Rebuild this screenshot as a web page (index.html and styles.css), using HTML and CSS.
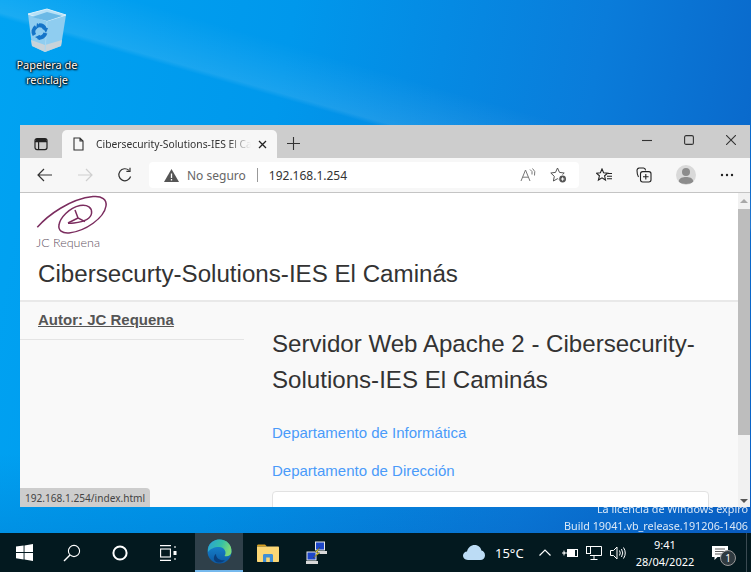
FILE: index.html
```html
<!DOCTYPE html>
<html lang="es">
<head>
<meta charset="utf-8">
<title>Escritorio</title>
<link rel="stylesheet" href="styles.css">
</head>
<body>
<div class="screen">
  <div class="desktop">
    <div class="desk-icon">
      <svg class="bin" width="46" height="48" viewBox="0 0 46 48">
        <path d="M4 8 L23 3 L42 9 L37 40 L21 46 L8 40 Z" fill="#8fcdf0"/>
        <path d="M4 8 L23 3 L42 9 L23 15 Z" fill="#b5e0f7" stroke="#d9f0fb" stroke-width="1"/>
        <path d="M8 11 L23 6 L38 10 L23 15 Z" fill="#6bb9e6"/>
        <path d="M7 34 L21 39 L38 34 L37 40 L21 46 L8 40 Z" fill="#c8d3da"/>
        <path d="M23 15 L21 46" stroke="#a5d8f3" stroke-width="1" fill="none"/>
        <g fill="none" stroke="#1574c8" stroke-width="4">
          <path d="M10.4 29 A6 6 0 0 1 12 20.8"/>
          <path d="M15 19.4 A6 6 0 0 1 21 23"/>
          <path d="M21.4 27 A6 6 0 0 1 14 31.4"/>
        </g>
        <g fill="#1574c8">
          <path d="M13 17 L17 20 L12 23 Z"/>
          <path d="M19 22 L24 22 L22 27 Z"/>
          <path d="M16 29 L16 34 L11 31 Z"/>
        </g>
      </svg>
      <span class="desk-label">Papelera de reciclaje</span>
    </div>

    <div class="watermark">
      <div>La licencia de Windows expiró</div>
      <div>Build 19041.vb_release.191206-1406</div>
    </div>

    <div class="window">
      <div class="tabstrip">
        <div class="tab-actions">
          <svg width="14" height="14" viewBox="0 0 14 14" fill="none" stroke="#222" stroke-width="1.2"><rect x="1" y="1.6" width="12" height="11" rx="2"/><path d="M1 4.6 H13 M4.6 4.6 V12.6"/><path d="M1.5 2 H12.5 V4.5 H1.5 Z" fill="#222" stroke="none"/></svg>
        </div>
        <div class="tab">
          <svg class="favicon" width="11" height="14" viewBox="0 0 11 14" fill="none" stroke="#333" stroke-width="1.1"><path d="M1 1 H7 L10 4 V13 H1 Z M7 1 V4 H10"/></svg>
          <span class="tab-title">Cibersecurity-Solutions-IES El Caminás</span>
          <svg class="tab-close" width="9" height="9" viewBox="0 0 9 9" stroke="#222" stroke-width="1.3"><path d="M1 1 L8 8 M8 1 L1 8"/></svg>
        </div>
        <svg class="new-tab" width="13" height="13" viewBox="0 0 13 13" stroke="#333" stroke-width="1.1"><path d="M6.5 0 V13 M0 6.5 H13"/></svg>
        <div class="win-controls">
          <svg width="10" height="10" viewBox="0 0 10 10" stroke="#333" stroke-width="1.1"><path d="M0 5.5 H10"/></svg>
          <svg width="10" height="10" viewBox="0 0 10 10" fill="none" stroke="#333" stroke-width="1.1"><rect x=".6" y=".6" width="8.8" height="8.8" rx="1.5"/></svg>
          <svg width="10" height="10" viewBox="0 0 10 10" stroke="#333" stroke-width="1.1"><path d="M0 0 L10 10 M10 0 L0 10"/></svg>
        </div>
      </div>

      <div class="toolbar">
        <div class="nav-buttons">
          <svg width="16" height="14" viewBox="0 0 16 14" fill="none" stroke="#333" stroke-width="1.2"><path d="M15 7 H1 M7 1 L1 7 L7 13"/></svg>
          <svg width="16" height="14" viewBox="0 0 16 14" fill="none" stroke="#cfcfcf" stroke-width="1.2"><path d="M1 7 H15 M9 1 L15 7 L9 13"/></svg>
          <svg width="16" height="16" viewBox="0 0 16 16" fill="none" stroke="#333" stroke-width="1.2"><path d="M13.6 9.5 A6 6 0 1 1 12 3.4"/><path d="M13 .8 V4.4 H9.4"/></svg>
        </div>
        <div class="address">
          <svg width="15" height="13" viewBox="0 0 15 13"><path d="M7.5 0 L15 13 H0 Z" fill="#555"/><path d="M7.5 4.5 V9 M7.5 10 V11.4" stroke="#fff" stroke-width="1.3"/></svg>
          <span class="insecure">No seguro</span>
          <span class="addr-sep"></span>
          <span class="url">192.168.1.254</span>
          <span class="addr-end">
            <svg width="16" height="14" viewBox="0 0 16 14" fill="none" stroke="#777" stroke-width="1"><path d="M1 13 L5.5 2 L10 13 M2.8 9.2 H8.2"/><path d="M10 1.5 Q13 3 12 6.5 M12.5 .5 Q16 3 14.5 7.5"/></svg>
            <svg width="17" height="16" viewBox="0 0 17 16" fill="none" stroke="#555" stroke-width="1"><path d="M7.5 1 L9.5 5.4 L14.2 6 L10.7 9.3 L11.6 14 L7.5 11.7 L3.4 14 L4.3 9.3 L.8 6 L5.5 5.4 Z"/><circle cx="12.6" cy="12" r="4.4" fill="#fff" stroke="none"/><circle cx="12.6" cy="12" r="3.4" fill="#555" stroke="none"/><path d="M10.9 12 H14.3 M12.6 10.3 V13.7" stroke="#fff"/></svg>
          </span>
        </div>
        <div class="tools">
          <svg width="16" height="14" viewBox="0 0 16 14" fill="none" stroke="#222" stroke-width="1.1"><path d="M6 1 L7.6 4.8 L11.6 5.2 L8.6 7.8 L9.5 12 L6 9.8 L2.4 12 L3.4 7.8 L.4 5.2 L4.4 4.8 Z"/><path d="M12 5.5 H16 M11 8.2 H16 M11 10.8 H16"/></svg>
          <svg width="16" height="16" viewBox="0 0 16 16" fill="none" stroke="#222" stroke-width="1.1"><path d="M2.5 10 C1.2 8 1 5 1 3.5 C1 2 2 1.2 3.2 1 L7.5 1 C9 1.2 9.4 2 9.6 3.4"/><rect x="4.5" y="4.6" width="10.5" height="10.4" rx="2.2"/><path d="M9.8 7 V12.6 M7 9.8 H12.6"/></svg>
          <span class="avatar"><svg width="20" height="20" viewBox="0 0 20 20" fill="#8c8c8c"><circle cx="10" cy="7" r="4"/><path d="M2.6 17 C3 12.6 7 12 10 12 C13 12 17 12.6 17.4 17 C15 19.6 5 19.6 2.6 17 Z"/></svg></span>
          <svg width="14" height="4" viewBox="0 0 14 4" fill="#222"><circle cx="2" cy="2" r="1.2"/><circle cx="7" cy="2" r="1.2"/><circle cx="12" cy="2" r="1.2"/></svg>
        </div>
      </div>

      <div class="viewport">
        <div class="page">
          <header class="site-header">
            <div class="logo">
              <svg class="logo-mark" width="74" height="42" viewBox="0 0 74 42" fill="none" stroke="#7b2d5f" stroke-width="1.5">
                <path d="M1.3 31.3 C12 19 34 3 57 .6 C66 -.4 71 4 70 10 C68 22 50 35 33 37 C26 37.6 22 34 23 29 C24 22 33 12 44 9.6 C52 8.4 56 12 55.6 17 C55 23 46 26 38 27 C35 27.4 33 27.4 32 27.3"/>
                <path d="M39 14 L42 22 L49 25.7 M32 27 L42 22"/>
              </svg>
              <span class="logo-text">JC Requena</span>
            </div>
            <h1 class="site-title">Cibersecurty-Solutions-IES El Caminás</h1>
          </header>
          <div class="columns">
            <aside class="sidebar">
              <a class="author">Autor: JC Requena</a>
            </aside>
            <main class="content">
              <h2 class="heading">Servidor Web Apache 2 - Cibersecurity-Solutions-IES El Caminás</h2>
              <p class="dept"><a>Departamento de Informática</a></p>
              <p class="dept"><a>Departamento de Dirección</a></p>
              <div class="card"></div>
            </main>
          </div>
        </div>
        <div class="scrollbar">
          <span class="arrow-up"></span>
          <span class="thumb"></span>
          <span class="arrow-down"></span>
        </div>
        <div class="status">192.168.1.254/index.html</div>
      </div>
    </div>
  </div>

  <footer class="taskbar">
    <div class="cell">
      <svg width="17" height="17" viewBox="0 0 17 17" fill="#fff"><path d="M0 2.6 L7.6 1.5 V8 H0 Z M8.5 1.4 L17 0 V8 H8.5 Z M0 9 H7.6 V15.4 L0 14.3 Z M8.5 9 H17 V17 L8.5 15.6 Z"/></svg>
    </div>
    <div class="cell">
      <svg width="18" height="18" viewBox="0 0 18 18" fill="none" stroke="#fff" stroke-width="1.1"><circle cx="11" cy="7" r="5.6"/><path d="M7 11 L1 17" stroke-width="1.4"/></svg>
    </div>
    <div class="cell">
      <svg width="16" height="16" viewBox="0 0 16 16" fill="none" stroke="#fff" stroke-width="2"><circle cx="8" cy="8" r="6.6"/></svg>
    </div>
    <div class="cell">
      <svg width="17" height="16" viewBox="0 0 17 16" fill="none" stroke="#fff" stroke-width="1.1"><path d="M0 .6 H11 M0 15.4 H11"/><rect x=".6" y="4" width="9.8" height="8"/><path d="M15 1 V3 M15 13 V15"/><rect x="13.5" y="6" width="3" height="4" fill="#fff" stroke="none"/></svg>
    </div>
    <div class="cell cell-active">
      <svg width="25" height="25" viewBox="0 0 25 25">
        <defs>
          <linearGradient id="edgeA" x1="0" y1="0" x2="1" y2="0.3"><stop offset="0" stop-color="#2a9fd8"/><stop offset=".6" stop-color="#35c1a5"/><stop offset="1" stop-color="#7ad77a"/></linearGradient>
          <linearGradient id="edgeB" x1="0" y1="0" x2="0" y2="1"><stop offset="0" stop-color="#1a8fd8"/><stop offset="1" stop-color="#0c59a4"/></linearGradient>
        </defs>
        <circle cx="12.5" cy="12.5" r="12" fill="url(#edgeB)"/>
        <path d="M1 10 C2 3 8 .5 12.5 .5 C20 .5 25 6 24.5 13 C24 17 20 18 17.5 17 C20 14 18 8 12 8 C7 8 3 10 1 13 Z" fill="url(#edgeA)"/>
        <path d="M9 15 C9 20 14 22 18 21 C15 24.5 10 24 8 22 C6 20 7 16 9 15 Z" fill="#0a3f7c"/>
      </svg>
    </div>
    <div class="cell">
      <svg class="folder" width="22" height="18" viewBox="0 0 22 18">
        <path d="M0 2 C0 1 .6 .5 1.5 .5 H8 L10 2.5 H0 Z" fill="#d8a020"/>
        <path d="M0 2.5 H21 C21.6 2.5 22 3 22 3.6 V17 C22 17.6 21.6 18 21 18 H1 C.4 18 0 17.6 0 17 Z" fill="#fbd775"/>
        <path d="M6 18 V11.4 C6 10.6 6.6 10 7.4 10 H14.6 C15.4 10 16 10.6 16 11.4 V18 H12.8 V13.4 H9.2 V18 Z" fill="#3f8fd6"/>
      </svg>
    </div>
    <div class="cell">
      <svg width="24" height="24" viewBox="0 0 24 24">
        <rect x="10.5" y="1" width="9" height="8" fill="#1d46c8" stroke="#e8e8e8"/>
        <path d="M11 10 H22 V13 H11 Z" fill="#d8d8d8"/>
        <rect x="2" y="11" width="9" height="8" fill="#1d46c8" stroke="#e8e8e8"/>
        <path d="M1 20 H13 V23 H1 Z" fill="#d8d8d8"/>
        <path d="M15 6 L10 11 L13 11.5 L8 17 L15 12 L12 11.4 Z" fill="#f6e323" stroke="#333" stroke-width=".4"/>
      </svg>
    </div>

    <div class="tray">
      <svg class="cloud" width="22" height="15" viewBox="0 0 22 15"><path d="M5 15 C1.5 15 0 12.6 0 10.6 C0 8 2 6.4 4 6.4 C5 2.6 8 0 11.6 0 C15.4 0 18 2.6 18.4 5.6 C20.6 6 22 8 22 10.4 C22 13 20 15 17.4 15 Z" fill="#bcdcf5"/></svg>
      <span class="temp">15°C</span>
      <svg class="tray-chevron" width="12" height="7" viewBox="0 0 12 7" fill="none" stroke="#fff" stroke-width="1.2"><path d="M.5 6.5 L6 1 L11.5 6.5"/></svg>
      <svg class="tray-icon" width="16" height="12" viewBox="0 0 16 12" fill="none" stroke="#fff"><path d="M0 6 H3 M2 3.6 V8.4 M2 6 H5"/><rect x="5.5" y="2.5" width="10" height="7"/><rect x="6" y="3" width="7" height="6" fill="#fff" stroke="none"/></svg>
      <svg class="tray-icon" width="16" height="14" viewBox="0 0 16 14" fill="none" stroke="#fff" stroke-width="1"><path d="M3 .5 H15.5 V9.5 H4 M8 9.5 V13 M4.5 13.5 H11.5"/><rect x=".5" y=".5" width="4" height="7"/></svg>
      <svg class="tray-icon" width="16" height="14" viewBox="0 0 16 14" fill="none" stroke="#fff" stroke-width="1"><path d="M.5 4.5 H3.5 L7 1 V13 L3.5 9.5 H.5 Z"/><path d="M9.5 4.5 Q11 7 9.5 9.5 M11.5 3 Q14 7 11.5 11 M13.5 1.5 Q17 7 13.5 12.5"/></svg>
      <div class="clock"><span>9:41</span><span>28/04/2022</span></div>
      <div class="notify">
        <svg width="16" height="14" viewBox="0 0 16 14"><path d="M0 0 H16 V11 H5.5 L2.5 14 V11 H0 Z" fill="#fff"/><path d="M3 3 H13 M3 5.5 H13 M3 8 H13" stroke="#333" stroke-width=".8"/></svg>
        <span class="badge">1</span>
      </div>
      <span class="show-desktop"></span>
    </div>
  </footer>
</div>
</body>
</html>
```

FILE: styles.css
```css
* { box-sizing: border-box; }
html, body { margin: 0; padding: 0; }
body { width: 751px; height: 572px; overflow: hidden; font-family: "Noto Sans", sans-serif; }
.screen { width: 751px; height: 572px; display: flex; flex-direction: column; }

.desktop {
  position: relative;
  height: 533px;
  overflow: hidden;
  background:
    linear-gradient(196deg, rgba(255,255,255,0) 170px, rgba(255,255,255,.1) 219px, rgba(255,255,255,0) 224px),
    linear-gradient(180deg, rgba(0,40,140,0) 85%, rgba(0,40,140,.12) 100%),
    linear-gradient(100deg, #00a3f2 0%, #0098ec 35%, #0a7cda 72%, #0a62c6 100%);
}

.desk-icon {
  position: absolute;
  left: 8px;
  top: 6px;
  width: 78px;
  display: flex;
  flex-direction: column;
  align-items: center;
}
.bin { display: block; }
.desk-label {
  margin-top: 3px;
  width: 78px;
  text-align: center;
  font-size: 11px;
  line-height: 15px;
  color: #fff;
  text-shadow: 0 0 2px #000, 1px 1px 2px #000, -1px 0 2px rgba(0,0,0,.8), 0 0 1px #000;
}

.watermark {
  position: absolute;
  right: 3px;
  bottom: -1px;
  text-align: right;
  color: #fff;
  font-size: 10.8px;
  line-height: 17px;
  opacity: .85;
}

.window {
  position: absolute;
  left: 20px;
  top: 125px;
  width: 730px;
  height: 382px;
  display: flex;
  flex-direction: column;
  background: #f7f7f7;
}

.tabstrip {
  height: 33px;
  flex: none;
  display: flex;
  align-items: flex-end;
  background: #cdcdcd;
}
.tab-actions {
  width: 42px;
  height: 33px;
  display: flex;
  align-items: center;
  justify-content: center;
  padding-top: 4px;
}
.tab {
  width: 215px;
  height: 28px;
  background: #f7f7f7;
  border-radius: 5px 5px 0 0;
  display: flex;
  align-items: center;
  padding: 0 10px 0 11px;
}
.favicon { flex: none; }
.tab-title {
  margin-left: 12px;
  width: 155px;
  overflow: hidden;
  white-space: nowrap;
  font-size: 10.3px;
  color: #333;
  -webkit-mask-image: linear-gradient(90deg, #000 85%, transparent 100%);
  mask-image: linear-gradient(90deg, #000 85%, transparent 100%);
}
.tab-close { margin-left: auto; flex: none; }
.new-tab { align-self: center; margin: 4px 0 0 10px; }
.win-controls {
  margin-left: auto;
  align-self: center;
  display: flex;
  gap: 32px;
  padding-right: 14px;
  margin-top: -4px;
}

.toolbar {
  height: 35px;
  flex: none;
  display: flex;
  align-items: center;
  background: #f7f7f7;
  border-bottom: 1px solid #c4c4c4;
}
.nav-buttons {
  width: 129px;
  display: flex;
  align-items: center;
  gap: 24px;
  padding-left: 17px;
}
.address {
  width: 430px;
  height: 26px;
  background: #fff;
  border-radius: 4px;
  display: flex;
  align-items: center;
  padding: 0 12px 0 15px;
}
.insecure { margin-left: 8px; font-size: 12px; color: #666; }
.addr-sep { width: 1px; height: 14px; background: #999; margin: 0 11px; }
.url { font-size: 12px; color: #333; }
.addr-end { margin-left: auto; display: flex; align-items: center; gap: 14px; }
.tools {
  flex: 1;
  display: flex;
  align-items: center;
  gap: 24px;
  padding-left: 17px;
}
.avatar {
  width: 20px;
  height: 20px;
  border-radius: 50%;
  background: #d9d9d9;
  overflow: hidden;
  display: block;
}
.avatar svg { display: block; }

.viewport {
  position: relative;
  flex: 1;
  min-height: 0;
  display: flex;
  background: #fff;
  overflow: hidden;
}
.page {
  width: 718px;
  flex: none;
  font-family: "Liberation Sans", Arial, sans-serif;
  background: #f9f9f9;
}
.site-header {
  height: 109px;
  background: #fff;
  border-bottom: 2px solid #e9e9e9;
  padding: 3px 0 0 16px;
}
.logo { display: flex; flex-direction: column; align-items: flex-start; }
.logo-mark { display: block; overflow: visible; }
.logo-text {
  font-family: Lato, sans-serif;
  font-weight: 300;
  font-size: 12.5px;
  line-height: 13px;
  margin-top: -2px;
  color: #5f5262;
}
.site-title {
  margin: 10px 0 0 2px;
  font-size: 24.15px;
  line-height: 30px;
  font-weight: 400;
  color: #333;
}
.columns { display: flex; }
.sidebar {
  width: 224px;
  flex: none;
  height: 38px;
  border-bottom: 1px solid #e4e4e4;
  padding: 9px 0 0 18px;
}
.author {
  font-weight: 700;
  font-size: 15px;
  line-height: 18px;
  color: #555;
  text-decoration: underline;
}
.content { flex: 1; padding: 24px 29px 0 28px; }
.heading {
  margin: 0 0 24px;
  font-size: 24.1px;
  line-height: 36px;
  font-weight: 400;
  color: #333;
}
.dept {
  margin: 0 0 16px;
  font-size: 15px;
  line-height: 22px;
}
.dept:last-of-type { margin-bottom: 9px; }
.dept a { color: #4a9bfa; }
.card {
  height: 60px;
  background: #fff;
  border: 1px solid #e2e2e2;
  border-radius: 4px;
}

.scrollbar {
  width: 12px;
  flex: none;
  background: #f1f1f1;
  display: flex;
  flex-direction: column;
  align-items: center;
  position: relative;
}
.arrow-up {
  margin-top: 6px;
  border: 4px solid transparent;
  border-top: 0;
  border-bottom: 4px solid #a8a8a8;
}
.thumb { width: 12px; height: 226px; margin-top: 6px; background: #bdbdbd; }
.arrow-down {
  margin-top: auto;
  margin-bottom: 4px;
  border: 4px solid transparent;
  border-bottom: 0;
  border-top: 4px solid #555;
}
.status {
  position: absolute;
  left: 0;
  bottom: 0;
  width: 130px;
  height: 19px;
  padding: 3px 0 0 5px;
  background: #cdcdcd;
  border-radius: 0 4px 0 0;
  font-size: 10.1px;
  line-height: 14px;
  color: #444;
  white-space: nowrap;
}

.taskbar {
  height: 39px;
  flex: none;
  display: flex;
  align-items: stretch;
  background: #03191f;
}
.cell {
  width: 48px;
  display: flex;
  align-items: center;
  justify-content: center;
}
.cell-active {
  margin: 0 2px 0 3px;
  background: #2f404a;
  border-bottom: 2px solid #76b9ed;
}
.folder { margin-right: 2px; }
.tray {
  margin-left: auto;
  display: flex;
  align-items: center;
  color: #fff;
}
.cloud { margin-right: 10px; }
.temp { width: 28px; font-size: 13px; white-space: nowrap; }
.tray-chevron { margin-left: 16px; margin-right: 11px; }
.tray-icon { margin-right: 8px; }
.clock {
  width: 66px;
  margin-left: -2px;
  display: flex;
  flex-direction: column;
  align-items: center;
  font-size: 11px;
  line-height: 17px;
}
.notify { position: relative; width: 48px; padding-right: 4px; display: flex; justify-content: center; }
.badge {
  position: absolute;
  left: 22px;
  top: 4px;
  width: 16px;
  height: 16px;
  border-radius: 50%;
  background: #2f3a40;
  border: 1px solid #999;
  font-size: 10px;
  line-height: 14px;
  text-align: center;
}
.show-desktop { width: 5px; height: 100%; border-left: 1px solid #3a4a52; }
```
